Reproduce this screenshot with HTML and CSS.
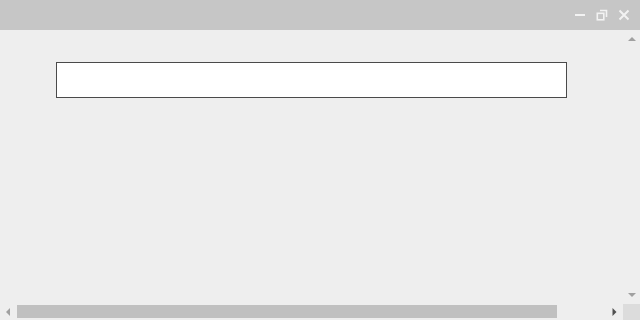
FILE: index.html
```html
<!DOCTYPE html>
<html>
<head>
<meta charset="utf-8">
<link rel="stylesheet" href="styles.css">
</head>
<body>
<div class="window">
  <div class="titlebar">
    <svg class="ctl" width="14" height="14" viewBox="0 0 14 14"><rect x="2" y="6" width="10" height="2" fill="#f2f2f2"/></svg>
    <svg class="ctl" width="14" height="14" viewBox="0 0 14 14"><path d="M5 2.5h6.5v6.5" fill="none" stroke="#f2f2f2" stroke-width="1.6"/><rect x="2.3" y="5.3" width="6.5" height="6.5" fill="none" stroke="#f2f2f2" stroke-width="1.6"/></svg>
    <svg class="ctl" width="14" height="14" viewBox="0 0 14 14"><path d="M2.5 2.5L11.5 11.5M11.5 2.5L2.5 11.5" stroke="#f2f2f2" stroke-width="2"/></svg>
  </div>
  <div class="body">
    <div class="content">
      <div class="field"></div>
    </div>
    <div class="vscroll">
      <svg width="16" height="16" viewBox="0 0 16 16"><path d="M4 10L8 6L12 10Z" fill="#a0a0a0"/></svg>
      <svg width="16" height="16" viewBox="0 0 16 16"><path d="M4 6L8 10L12 6Z" fill="#a0a0a0"/></svg>
    </div>
  </div>
  <div class="hscroll">
    <svg class="arr" width="17" height="16" viewBox="0 0 17 16"><path d="M10 4L6 8L10 12Z" fill="#a0a0a0"/></svg>
    <div class="track"><div class="thumb"></div></div>
    <svg class="arr" width="16" height="16" viewBox="0 0 16 16"><path d="M5.5 4L9.5 8L5.5 12Z" fill="#505050"/></svg>
    <div class="corner"></div>
  </div>
</div>
</body>
</html>
```

FILE: styles.css
```css
html, body {
  margin: 0;
  padding: 0;
  width: 640px;
  height: 320px;
  overflow: hidden;
  font-family: "Liberation Sans", sans-serif;
}
.window {
  width: 640px;
  height: 320px;
  display: flex;
  flex-direction: column;
  background: #eeeeee;
}
.titlebar {
  height: 30px;
  background: #c6c6c6;
  display: flex;
  align-items: center;
  justify-content: flex-end;
  padding-right: 9px;
  gap: 8px;
  box-sizing: border-box;
}
.ctl {
  display: block;
}
.body {
  flex: 1;
  display: flex;
}
.content {
  flex: 1;
  padding: 32px 57px 0 56px;
}
.field {
  height: 34px;
  border: 1px solid #4a4a4a;
  background: #ffffff;
}
.vscroll {
  width: 16px;
  display: flex;
  flex-direction: column;
  justify-content: space-between;
  padding: 1px 0 1px 0;
}
.vscroll svg {
  display: block;
}
.hscroll {
  height: 16px;
  display: flex;
  align-items: stretch;
}
.arr {
  display: block;
}
.track {
  flex: 1;
  padding: 1px 0 2px 0;
  display: flex;
}
.thumb {
  width: 540px;
  background: #c0c0c0;
}
.corner {
  width: 17px;
  background: #dcdcdc;
}
```
